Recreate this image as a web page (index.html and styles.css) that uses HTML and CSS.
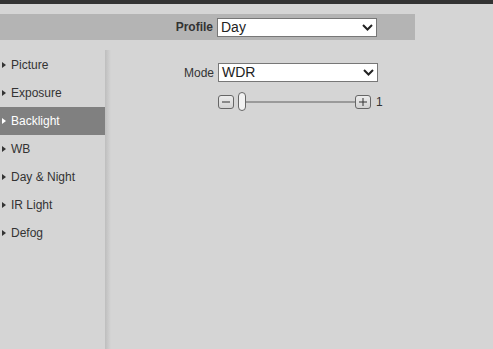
FILE: index.html
```html
<!DOCTYPE html>
<html>
<head>
<meta charset="utf-8">
<link rel="stylesheet" href="styles.css">
</head>
<body>
<div class="topbar"></div>
<div class="profilebar">
  <span class="profile-label">Profile</span>
  <div class="select">
    <span>Day</span>
    <svg class="chev" width="11" height="7" viewBox="0 0 11 7"><path d="M1 1 L5.5 5.5 L10 1" fill="none" stroke="#222" stroke-width="2"/></svg>
  </div>
</div>
<div class="main">
  <nav class="sidebar">
    <div class="item"><span class="tri"></span>Picture</div>
    <div class="item"><span class="tri"></span>Exposure</div>
    <div class="item active"><span class="tri"></span>Backlight</div>
    <div class="item"><span class="tri"></span>WB</div>
    <div class="item"><span class="tri"></span>Day &amp; Night</div>
    <div class="item"><span class="tri"></span>IR Light</div>
    <div class="item"><span class="tri"></span>Defog</div>
  </nav>
  <div class="sidebar-shadow"></div>
  <div class="content">
    <div class="form">
      <label class="label">Mode</label>
      <div class="select mode">
        <span>WDR</span>
        <svg class="chev" width="11" height="7" viewBox="0 0 11 7"><path d="M1 1 L5.5 5.5 L10 1" fill="none" stroke="#222" stroke-width="2"/></svg>
      </div>
      <div></div>
      <div class="slider">
        <div class="btn"><svg width="14" height="12" viewBox="0 0 14 12"><path d="M3 6 H11" stroke="#333" stroke-width="1"/></svg></div>
        <div class="thumb"></div>
        <div class="track"></div>
        <div class="btn"><svg width="14" height="12" viewBox="0 0 14 12"><path d="M3 6 H11 M7 2 V10" stroke="#333" stroke-width="1"/></svg></div>
        <span class="value">1</span>
      </div>
    </div>
  </div>
</div>
</body>
</html>
```
FILE: styles.css
```css
html, body {
  margin: 0;
  padding: 0;
}
body {
  background: #d5d5d5;
  font-family: "Liberation Sans", Arial, sans-serif;
  font-size: 12px;
  color: #333;
  height: 349px;
  overflow: hidden;
}
.topbar {
  height: 4px;
  background: #333333;
}
.profilebar {
  margin-top: 10px;
  width: 415px;
  height: 26px;
  background: #b4b4b4;
  display: flex;
  align-items: center;
  justify-content: flex-end;
  padding-right: 38px;
  box-sizing: border-box;
}
.profile-label {
  font-weight: bold;
  margin-right: 4px;
}
.select {
  width: 160px;
  height: 19px;
  border: 1px solid #777;
  background: #fff;
  box-sizing: border-box;
  display: flex;
  align-items: center;
  justify-content: space-between;
  padding: 0 3px 0 3px;
  font-size: 14px;
  color: #222;
}
.select span {
  line-height: 17px;
}
.main {
  display: flex;
  margin-top: 10px;
  height: 299px;
}
.sidebar {
  width: 105px;
  padding-top: 1px;
  display: flex;
  flex-direction: column;
}
.sidebar-shadow {
  width: 6px;
  background: linear-gradient(to right, #bebebe, #d5d5d5);
}
.item {
  height: 28px;
  display: flex;
  align-items: center;
  color: #333;
}
.item .tri {
  width: 0;
  height: 0;
  border-left: 4px solid #333;
  border-top: 3.5px solid transparent;
  border-bottom: 3.5px solid transparent;
  margin-left: 2px;
  margin-right: 5px;
}
.item.active {
  background: #808080;
  color: #fff;
}
.item.active .tri {
  border-left-color: #fff;
}
.content {
  flex: 1;
}
.form {
  display: grid;
  grid-template-columns: 103px 160px;
  column-gap: 4px;
  row-gap: 10px;
  padding-top: 13px;
}
.label {
  text-align: right;
  align-self: center;
}
.slider {
  display: flex;
  align-items: center;
  height: 19px;
}
.btn {
  flex-shrink: 0;
  width: 16px;
  height: 14px;
  box-sizing: border-box;
  border: 1px solid #666;
  border-radius: 3px;
  background: linear-gradient(#ececec, #d2d2d2);
  display: flex;
  align-items: center;
  justify-content: center;
}
.thumb {
  flex-shrink: 0;
  width: 8px;
  height: 19px;
  box-sizing: border-box;
  border: 1px solid #666;
  border-radius: 4px;
  background: #f2f2f2;
  margin-left: 4px;
}
.track {
  flex-shrink: 0;
  width: 109px;
  height: 2px;
  background: #9a9a9a;
}
.value {
  flex-shrink: 0;
  margin-left: 5px;
}
```
